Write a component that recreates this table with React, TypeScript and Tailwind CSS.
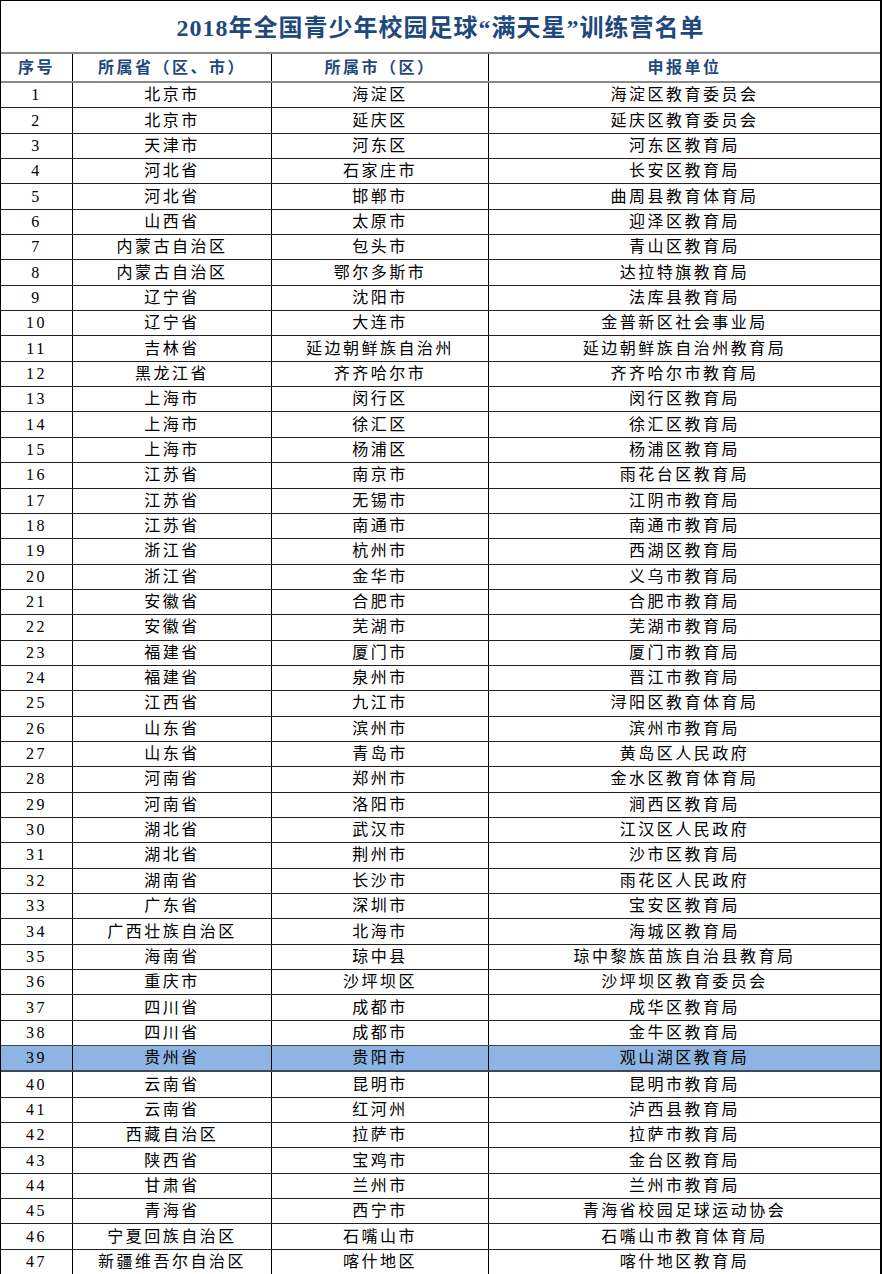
const rows: [string, string, string][] = [
  ['北京市', '海淀区', '海淀区教育委员会'],
  ['北京市', '延庆区', '延庆区教育委员会'],
  ['天津市', '河东区', '河东区教育局'],
  ['河北省', '石家庄市', '长安区教育局'],
  ['河北省', '邯郸市', '曲周县教育体育局'],
  ['山西省', '太原市', '迎泽区教育局'],
  ['内蒙古自治区', '包头市', '青山区教育局'],
  ['内蒙古自治区', '鄂尔多斯市', '达拉特旗教育局'],
  ['辽宁省', '沈阳市', '法库县教育局'],
  ['辽宁省', '大连市', '金普新区社会事业局'],
  ['吉林省', '延边朝鲜族自治州', '延边朝鲜族自治州教育局'],
  ['黑龙江省', '齐齐哈尔市', '齐齐哈尔市教育局'],
  ['上海市', '闵行区', '闵行区教育局'],
  ['上海市', '徐汇区', '徐汇区教育局'],
  ['上海市', '杨浦区', '杨浦区教育局'],
  ['江苏省', '南京市', '雨花台区教育局'],
  ['江苏省', '无锡市', '江阴市教育局'],
  ['江苏省', '南通市', '南通市教育局'],
  ['浙江省', '杭州市', '西湖区教育局'],
  ['浙江省', '金华市', '义乌市教育局'],
  ['安徽省', '合肥市', '合肥市教育局'],
  ['安徽省', '芜湖市', '芜湖市教育局'],
  ['福建省', '厦门市', '厦门市教育局'],
  ['福建省', '泉州市', '晋江市教育局'],
  ['江西省', '九江市', '浔阳区教育体育局'],
  ['山东省', '滨州市', '滨州市教育局'],
  ['山东省', '青岛市', '黄岛区人民政府'],
  ['河南省', '郑州市', '金水区教育体育局'],
  ['河南省', '洛阳市', '涧西区教育局'],
  ['湖北省', '武汉市', '江汉区人民政府'],
  ['湖北省', '荆州市', '沙市区教育局'],
  ['湖南省', '长沙市', '雨花区人民政府'],
  ['广东省', '深圳市', '宝安区教育局'],
  ['广西壮族自治区', '北海市', '海城区教育局'],
  ['海南省', '琼中县', '琼中黎族苗族自治县教育局'],
  ['重庆市', '沙坪坝区', '沙坪坝区教育委员会'],
  ['四川省', '成都市', '成华区教育局'],
  ['四川省', '成都市', '金牛区教育局'],
  ['贵州省', '贵阳市', '观山湖区教育局'],
  ['云南省', '昆明市', '昆明市教育局'],
  ['云南省', '红河州', '泸西县教育局'],
  ['西藏自治区', '拉萨市', '拉萨市教育局'],
  ['陕西省', '宝鸡市', '金台区教育局'],
  ['甘肃省', '兰州市', '兰州市教育局'],
  ['青海省', '西宁市', '青海省校园足球运动协会'],
  ['宁夏回族自治区', '石嘴山市', '石嘴山市教育体育局'],
  ['新疆维吾尔自治区', '喀什地区', '喀什地区教育局'],
]

const font = { fontFamily: '"Liberation Serif", "Noto Sans CJK SC", serif' }

export default function App() {
  return (
    <div
      className="w-[882px] h-[1274px] flex flex-col bg-white border-l border-t border-r-2 border-black text-black"
      style={font}
    >
      {/* Title */}
      <div className="h-[53px] flex items-center justify-center border-b-2 border-[#8a8a8a]">
        <h1 className="text-[24px] font-bold text-[#1f497d] tracking-[1px] pt-[2px]">
          2018年全国青少年校园足球“满天星”训练营名单
        </h1>
      </div>

      {/* Header */}
      <div className="h-[29px] grid grid-cols-[72px_199px_217px_1fr] border-b-2 border-[#8a8a8a] text-[16px] font-bold text-[#1f497d] tracking-[2.5px]">
        <div className="flex items-center justify-center border-r border-black">序号</div>
        <div className="flex items-center justify-center border-r border-black">所属省（区、市）</div>
        <div className="flex items-center justify-center border-r border-black">所属市（区）</div>
        <div className="flex items-center justify-center">申报单位</div>
      </div>

      {/* Rows */}
      <div className="flex-1 flex flex-col">
        {rows.map((r, i) => {
          const hl = i === 38
          const last = i === rows.length - 1
          return (
            <div
              key={i}
              className={`flex-1 grid grid-cols-[72px_199px_217px_1fr] text-[16px] tracking-[2.5px] ${
                hl ? 'bg-[#8db4e2] border-t border-[#3a4a60] -mt-px' : ''
              } ${last ? '' : hl ? 'border-b-2 border-[#1f2f45]' : 'border-b border-[#222]'}`}
            >
              <div className="flex items-center justify-center border-r border-black">{i + 1}</div>
              <div className="flex items-center justify-center border-r border-black">{r[0]}</div>
              <div className="flex items-center justify-center border-r border-black">{r[1]}</div>
              <div className="flex items-center justify-center">{r[2]}</div>
            </div>
          )
        })}
      </div>
    </div>
  )
}
